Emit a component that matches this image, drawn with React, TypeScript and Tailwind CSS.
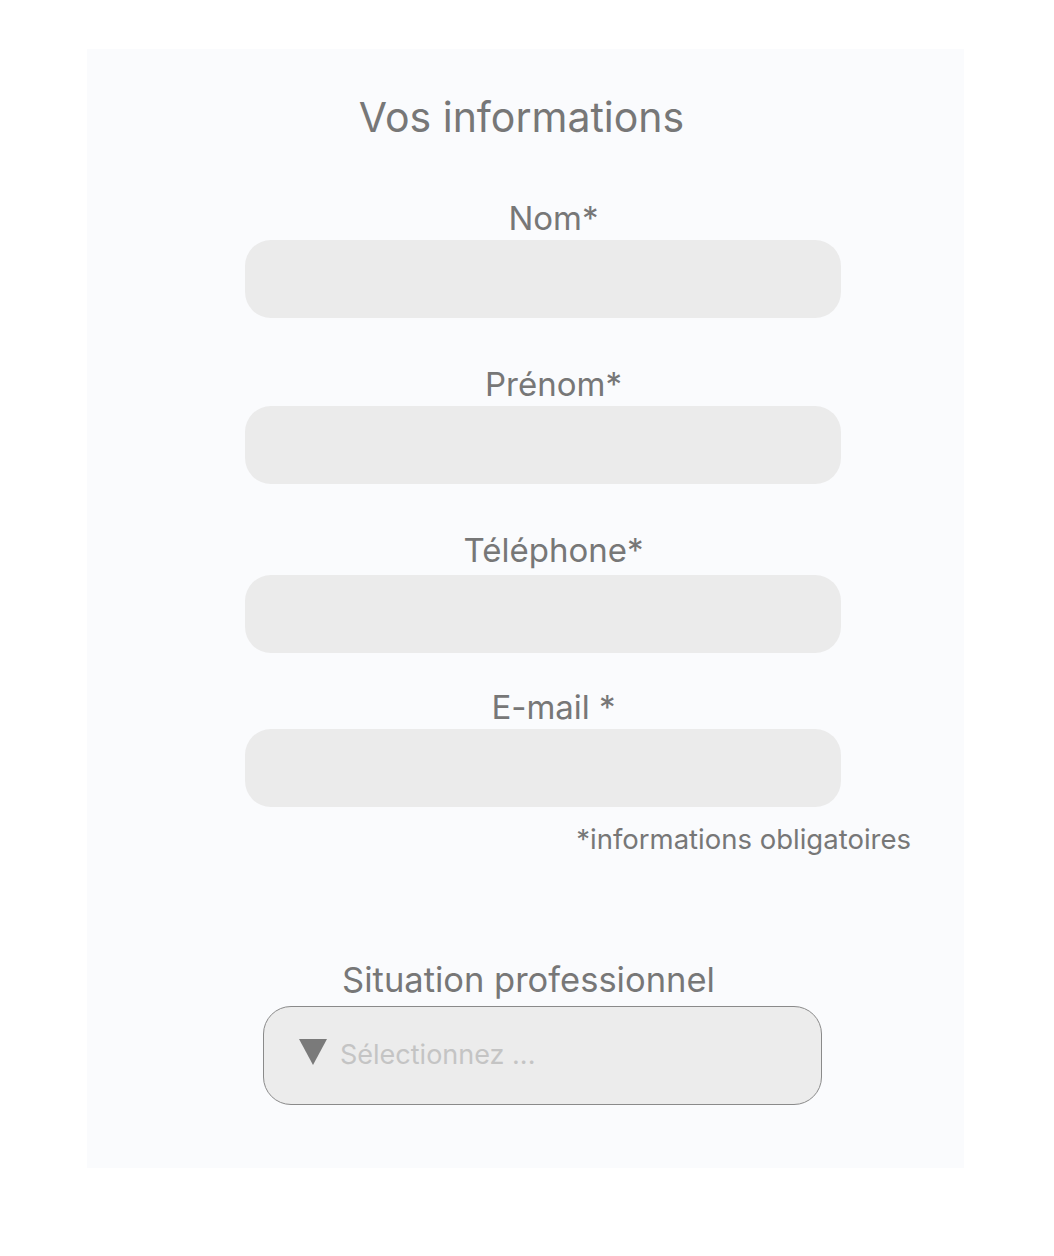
const FIELDS = [
  { label: "Nom*", top: "mt-[60px]", gap: "mb-[4px]" },
  { label: "Prénom*", top: "mt-[48px]", gap: "mb-[4px]" },
  { label: "Téléphone*", top: "mt-[48px]", gap: "mb-[7px]" },
  { label: "E-mail *", top: "mt-[36px]", gap: "mb-[4px]" },
]

export default function App() {
  return (
    <main className="min-h-screen bg-white pt-[49px] font-['Inter','Liberation_Sans',sans-serif]">
      <section className="ml-[87px] flex h-[1119px] w-[877px] flex-col items-center bg-[#fafbfd] text-[#777777]">
        <h1 className="mt-[45px] mr-[8px] text-[41px] leading-[46px]">
          Vos informations
        </h1>

        {FIELDS.map(({ label, top, gap }) => (
          <div key={label} className={`${top} ml-[34px] flex flex-col items-center`}>
            <label className={`${gap} ml-[22px] text-[33px] leading-[36px]`}>
              {label}
            </label>
            <div className="h-[78px] w-[596px] rounded-[26px] bg-[#ebebeb]" />
          </div>
        ))}

        <p className="mt-[17px] mr-[53px] self-end text-[27.5px] leading-[30px]">
          *informations obligatoires
        </p>

        <div className="mt-[108px] ml-[34px] flex flex-col items-center">
          <label className="mr-[28px] mb-[8px] text-[34.5px] leading-[36px]">
            Situation professionnel
          </label>
          <div className="flex h-[99px] w-[559px] items-center gap-[12px] rounded-[28px] border border-[#8a8a8a] bg-[#ececec] pl-[34px]">
            <svg width="30" height="28" viewBox="0 0 30 28" className="-mt-[8px]">
              <path d="M1 1 H29 L15 27 Z" fill="#7a7a7a" />
            </svg>
            <span className="text-[27px] text-[#c4c4c4]">Sélectionnez ...</span>
          </div>
        </div>
      </section>
    </main>
  )
}
